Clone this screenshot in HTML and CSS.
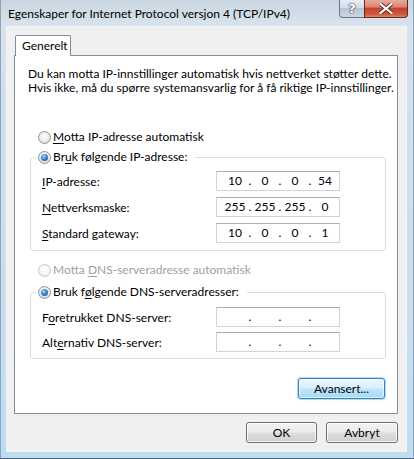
FILE: index.html
```html
<!DOCTYPE html>
<html lang="no">
<head>
<meta charset="utf-8">
<title>Egenskaper for Internet Protocol versjon 4 (TCP/IPv4)</title>
<link rel="stylesheet" href="styles.css">
</head>
<body>
<div class="window">
  <div class="titlebar">
    <span class="title">Egenskaper for Internet Protocol versjon 4 (TCP/IPv4)</span>
    <div class="caption-btns">
      <div class="cap-help">?</div>
      <div class="cap-close">
        <svg width="14" height="11" viewBox="0 0 14 11"><path d="M1.5 1 L12.5 10 M12.5 1 L1.5 10" stroke="#5a2a20" stroke-width="4" stroke-linecap="square"/><path d="M1.5 1 L12.5 10 M12.5 1 L1.5 10" stroke="#fff" stroke-width="2.2" stroke-linecap="square"/></svg>
      </div>
    </div>
  </div>
  <div class="client">
    <div class="tabs"><div class="tab">Generelt</div></div>
    <div class="panel">
      <p class="intro">Du kan motta IP-innstillinger automatisk hvis nettverket støtter dette.<br>Hvis ikke, må du spørre systemansvarlig for å få riktige IP-innstillinger.</p>

      <div class="radio r-first"><span class="rb"></span><span><u>M</u>otta IP-adresse automatisk</span></div>

      <fieldset class="group g-ip">
        <legend><span class="radio"><span class="rb on"></span><span>Br<u>u</u>k følgende IP-adresse:</span></span></legend>
        <div class="rows">
          <div class="row"><span><u>I</u>P-adresse:</span><div class="ipbox"><span>10</span><span>.</span><span>0</span><span>.</span><span>0</span><span>.</span><span>54</span></div></div>
          <div class="row"><span><u>N</u>ettverksmaske:</span><div class="ipbox"><span>255</span><span>.</span><span>255</span><span>.</span><span>255</span><span>.</span><span>0</span></div></div>
          <div class="row"><span><u>S</u>tandard gateway:</span><div class="ipbox"><span>10</span><span>.</span><span>0</span><span>.</span><span>0</span><span>.</span><span>1</span></div></div>
        </div>
      </fieldset>

      <div class="radio r-dns disabled"><span class="rb"></span><span>Motta <u>D</u>NS-serveradresse automatisk</span></div>

      <fieldset class="group g-dns">
        <legend><span class="radio"><span class="rb on"></span><span>Bruk f<u>ø</u>lgende DNS-serveradresser:</span></span></legend>
        <div class="rows rows-dns">
          <div class="row"><span>F<u>o</u>retrukket DNS-server:</span><div class="ipbox"><span></span><span>.</span><span></span><span>.</span><span></span><span>.</span><span></span></div></div>
          <div class="row"><span>Alt<u>e</u>rnativ DNS-server:</span><div class="ipbox"><span></span><span>.</span><span></span><span>.</span><span></span><span>.</span><span></span></div></div>
        </div>
      </fieldset>

      <div class="adv-row"><button class="btn btn-default btn-adv">Avansert...</button></div>
    </div>
    <div class="footer">
      <button class="btn btn-ok">OK</button>
      <button class="btn btn-cancel">Avbryt</button>
    </div>
  </div>
</div>
</body>
</html>
```
FILE: styles.css
```css
* { box-sizing: border-box; }
html, body { margin: 0; padding: 0; }
body {
  font-family: Lato, "Noto Sans", sans-serif;
  font-size: 12px;
  color: #000;
  background: #fff;
}
u { text-decoration-thickness: 1px; text-underline-offset: 2px; }

.window {
  width: 414px;
  height: 459px;
  display: flex;
  flex-direction: column;
  background: linear-gradient(180deg, #c9d5e1 0%, #d7e2ec 5%, #d0dfec 30%, #c9def0 70%, #bddcf2 100%);
  box-shadow: inset 0 -1px 0 #51657a, inset 1px 0 0 #8ea4b8, inset -1px 0 0 #8ea4b8;
  overflow: hidden;
}

.titlebar {
  height: 27px;
  flex: none;
  display: flex;
  align-items: flex-start;
}
.title {
  padding-left: 8px;
  margin-top: 6px;
  line-height: 16px;
  white-space: nowrap;
}
.caption-btns {
  margin-left: auto;
  margin-right: 6px;
  display: flex;
  height: 18px;
}
.cap-help {
  width: 25px;
  height: 18px;
  border: 1px solid #6b7786;
  border-top: none;
  border-right: none;
  border-radius: 0 0 0 4px;
  background: linear-gradient(180deg, #e6edf3 0%, #d3dee8 45%, #b8c6d4 50%, #c9d6e2 100%);
  color: #fff;
  font-family: "DejaVu Sans", sans-serif;
  font-weight: bold;
  font-size: 13px;
  line-height: 17px;
  text-align: center;
  text-shadow: 0 0 1px #3b4654, 0 0 1px #3b4654, 0 0 2px #3b4654;
}
.cap-close {
  width: 44px;
  height: 18px;
  border: 1px solid #5f2a22;
  border-top: none;
  border-radius: 0 0 4px 0;
  background: linear-gradient(180deg, #e9a99a 0%, #db8572 40%, #c4432c 50%, #cf5a3f 85%, #e08a6c 100%);
  display: flex;
  align-items: center;
  justify-content: center;
}

.client {
  flex: 1;
  margin: 0 8px 8px 7px;
  background: #f0f0f0;
  box-shadow: 0 0 0 1px rgba(255,255,255,0.7);
  display: flex;
  flex-direction: column;
}

.tabs {
  margin-top: 8px;
  padding-left: 8px;
  height: 20px;
  display: flex;
}
.tab {
  width: 56px;
  height: 21px;
  padding: 0 6px;
  background: #fff;
  border: 1px solid #898c95;
  border-bottom: none;
  border-radius: 2px 2px 0 0;
  line-height: 19px;
  position: relative;
  z-index: 1;
}

.panel {
  margin: 0 8px 0 7px;
  height: 359px;
  background: #fff;
  border: 1px solid #898c95;
  padding: 12px 12px 0 13px;
}

.intro {
  margin: -1px 0 0 0;
  line-height: 14px;
  white-space: nowrap;
}

.radio {
  display: flex;
  align-items: center;
  height: 16px;
  line-height: 16px;
  white-space: nowrap;
}
.rb {
  width: 13px;
  height: 13px;
  margin-right: 2px;
  border-radius: 50%;
  border: 1px solid #8e9297;
  background: radial-gradient(circle at 50% 40%, #ffffff 0%, #eeeeee 45%, #d2d2d2 100%);
  display: flex;
  align-items: center;
  justify-content: center;
  flex: none;
}
.rb.on::after {
  content: "";
  width: 7px;
  height: 7px;
  border-radius: 50%;
  background: radial-gradient(circle at 40% 35%, #a9d6f5 0%, #3b87cc 45%, #124a86 100%);
}
.disabled { color: #a0a0a0; }
.disabled .rb {
  border-color: #c6c8cb;
  background: radial-gradient(circle at 50% 40%, #ffffff 0%, #f3f3f3 60%, #e4e4e4 100%);
}

.r-first { margin-top: 34px; margin-left: 10px; }
.r-dns { margin-top: 11px; margin-left: 10px; }

.group {
  width: 356px;
  margin: 0 0 0 2px;
  padding: 0;
  border: 1px solid #d5dfe5;
  border-radius: 3px;
}
.g-ip { margin-top: 4px; }
.g-dns { margin-top: 6px; }
.group legend {
  margin-left: 5px;
  padding: 0 8px 0 2px;
}

.rows {
  padding: 6px 45px 7px 11px;
  display: flex;
  flex-direction: column;
  gap: 6px;
}
.rows-dns {
  padding-top: 7px;
  padding-bottom: 6px;
  gap: 5px;
}
.row {
  display: flex;
  align-items: center;
  justify-content: space-between;
  height: 20px;
  white-space: nowrap;
}

.ipbox {
  width: 124px;
  height: 20px;
  border: 1px solid #d0d3d8;
  border-top-color: #abadb3;
  background: #fff;
  padding-left: 5px;
  display: grid;
  grid-template-columns: 26px 4px 26px 4px 26px 4px 26px;
  align-items: center;
  text-align: center;
  line-height: 18px;
}

.adv-row {
  margin-top: 19px;
  display: flex;
  justify-content: flex-end;
}

.btn {
  font: inherit;
  color: #000;
  height: 21px;
  padding: 0;
  border: 1px solid #707070;
  border-radius: 3px;
  background: linear-gradient(180deg, #f2f2f2 0%, #ebebeb 48%, #dddddd 52%, #cfcfcf 100%);
  box-shadow: inset 0 0 0 1px rgba(255,255,255,0.8);
  line-height: 19px;
  text-align: center;
}
.btn-default {
  border-color: #3c7fb1;
  background: linear-gradient(180deg, #eaf6fd 0%, #d9f0fc 48%, #bee6fd 52%, #a7d9f5 100%);
  box-shadow: inset 0 0 0 1px rgba(255,255,255,0.6), 0 0 1px 1px rgba(90,180,230,0.5);
}
.btn-adv { width: 87px; }
.btn-ok { width: 71px; }
.btn-cancel { width: 72px; }

.footer {
  display: flex;
  justify-content: flex-end;
  gap: 9px;
  padding: 8px 8px 0 0;
}
```
